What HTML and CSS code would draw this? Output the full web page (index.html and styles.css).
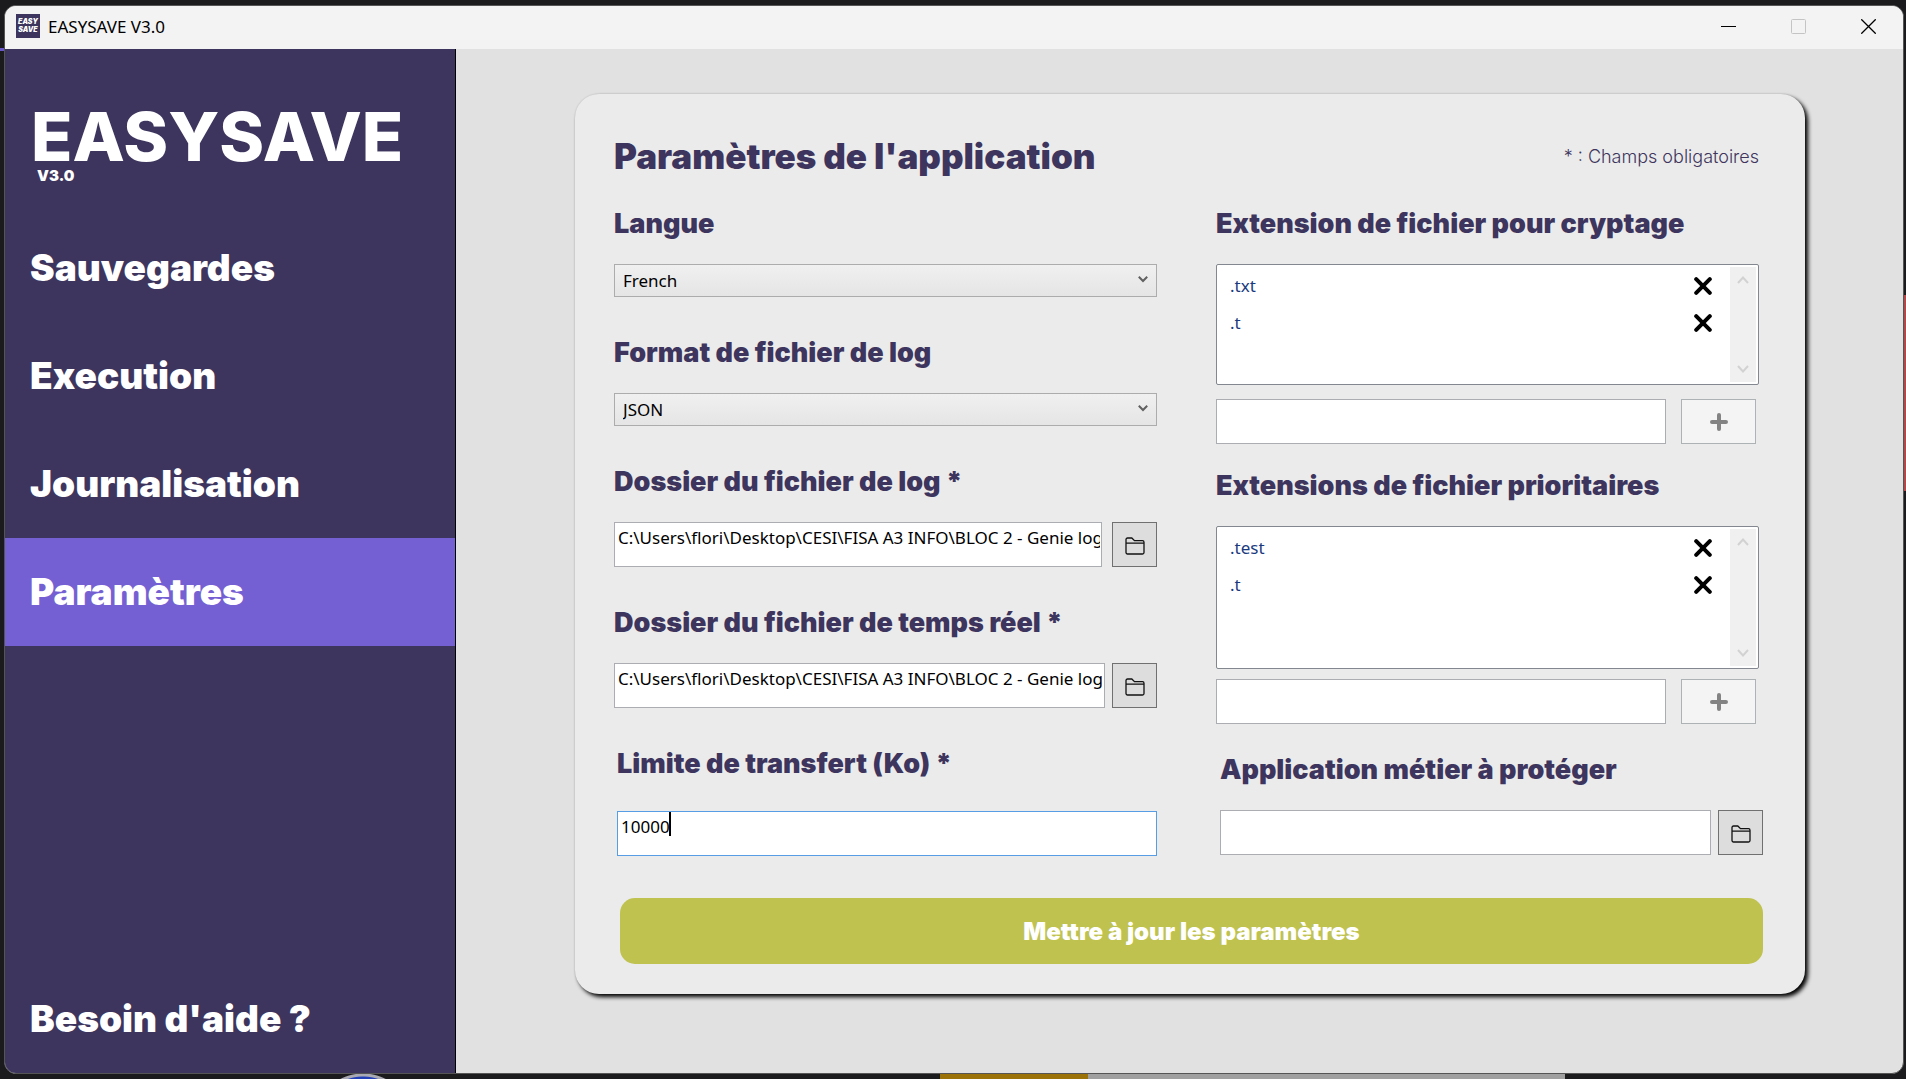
FILE: index.html
```html
<!DOCTYPE html>
<html lang="fr">
<head>
  <meta charset="UTF-8">
  <meta name="viewport" content="width=device-width, initial-scale=1.0">
  <title>EASYSAVE V3.0</title>
  <link rel="stylesheet" href="styles.css">
</head>
<body>
  <div class="window">
    <header class="titlebar">
      <span class="app-icon"><span>EASY</span><span>SAVE</span></span>
      <span class="app-title">EASYSAVE V3.0</span>
      <div class="window-buttons">
        <button type="button" aria-label="Réduire">
          <svg width="15" height="15" viewBox="0 0 15 15"><path d="M0 7.5h15" stroke="#000"/></svg>
        </button>
        <button type="button" aria-label="Agrandir" disabled>
          <svg width="15" height="15" viewBox="0 0 15 15"><rect x="0.5" y="0.5" width="14" height="14" rx="1" fill="none" stroke="#c4c4c4"/></svg>
        </button>
        <button type="button" aria-label="Fermer">
          <svg width="15" height="15" viewBox="0 0 15 15"><path d="M0.3 0.3l14.4 14.4M14.7 0.3L0.3 14.7" stroke="#000" stroke-width="1.3"/></svg>
        </button>
      </div>
    </header>

    <div class="layout">
      <nav class="sidebar">
        <div class="logo">EASYSAVE</div>
        <div class="version">V3.0</div>
        <a class="nav-link" href="#sauvegardes">Sauvegardes</a>
        <a class="nav-link" href="#execution">Execution</a>
        <a class="nav-link" href="#journalisation">Journalisation</a>
        <a class="nav-link active" href="#parametres">Paramètres</a>
        <a class="nav-link help" href="#aide">Besoin d'aide ?</a>
      </nav>

      <main class="content">
        <form class="card" id="settingsForm">
          <div class="card-header">
            <h1>Paramètres de l'application</h1>
            <span class="required-note">* : Champs obligatoires</span>
          </div>

          <div class="columns">
            <div class="column">
              <div class="field">
                <label for="language">Langue</label>
                <div class="select-wrap">
                  <select id="language" name="language">
                    <option>French</option>
                    <option>English</option>
                  </select>
                  <svg class="chevron" width="10" height="7" viewBox="0 0 10 7"><path d="M0.8 0.8L5 5l4.200-4.200" fill="none" stroke="#606060" stroke-width="2"/></svg>
                </div>
              </div>
              <div class="field">
                <label for="logFormat">Format de fichier de log</label>
                <div class="select-wrap">
                  <select id="logFormat" name="logFormat">
                    <option>JSON</option>
                    <option>XML</option>
                  </select>
                  <svg class="chevron" width="10" height="7" viewBox="0 0 10 7"><path d="M0.8 0.8L5 5l4.200-4.200" fill="none" stroke="#606060" stroke-width="2"/></svg>
                </div>
              </div>
              <div class="field">
                <label for="logFolder">Dossier du fichier de log *</label>
                <div class="input-row log-row">
                  <input type="text" id="logFolder" name="logFolder" value="C:\Users\flori\Desktop\CESI\FISA A3 INFO\BLOC 2 - Genie logiciel">
                  <button type="button" class="browse" aria-label="Parcourir">
                    <svg width="20" height="18" viewBox="0 0 20 18"><path d="M1 15.500V2.500A1.500 1.500 0 0 1 2.500 1H6.800L9.500 3.700H17.500A1.500 1.500 0 0 1 19 5.200V15.500A1.500 1.500 0 0 1 17.500 17H2.500A1.500 1.500 0 0 1 1 15.500zM1 6.200H19" fill="none" stroke="#111" stroke-width="1.3"/></svg>
                  </button>
                </div>
              </div>
              <div class="field">
                <label for="liveFolder">Dossier du fichier de temps réel *</label>
                <div class="input-row">
                  <input type="text" id="liveFolder" name="liveFolder" value="C:\Users\flori\Desktop\CESI\FISA A3 INFO\BLOC 2 - Genie logiciel">
                  <button type="button" class="browse" aria-label="Parcourir">
                    <svg width="20" height="18" viewBox="0 0 20 18"><path d="M1 15.500V2.500A1.500 1.500 0 0 1 2.500 1H6.800L9.500 3.700H17.500A1.500 1.500 0 0 1 19 5.200V15.500A1.500 1.500 0 0 1 17.500 17H2.500A1.500 1.500 0 0 1 1 15.500zM1 6.200H19" fill="none" stroke="#111" stroke-width="1.3"/></svg>
                  </button>
                </div>
              </div>
              <div class="field limit-field">
                <label for="limit">Limite de transfert (Ko) *</label>
                <div class="input-row">
                  <input type="text" id="limit" name="limit" class="focused" value="10000">
                  <span class="caret"></span>
                </div>
              </div>
            </div>

            <div class="column">
              <div class="field crypt-field">
                <label for="cryptExt">Extension de fichier pour cryptage</label>
                <div class="list">
                  <ul>
                    <li>.txt
                      <button type="button" class="remove" aria-label="Supprimer .txt"><svg width="18" height="18" viewBox="0 0 18 18"><path d="M2.200 2.200l13.600 13.600M15.800 2.200L2.200 15.800"/></svg></button>
                    </li>
                    <li>.t
                      <button type="button" class="remove" aria-label="Supprimer .t"><svg width="18" height="18" viewBox="0 0 18 18"><path d="M2.200 2.200l13.600 13.600M15.800 2.200L2.200 15.800"/></svg></button>
                    </li>
                  </ul>
                  <div class="scrollbar">
                    <svg width="12" height="8" viewBox="0 0 12 8"><path d="M1 7l5-5.500L11 7"/></svg>
                    <svg width="12" height="8" viewBox="0 0 12 8"><path d="M1 1l5 5.500L11 1"/></svg>
                  </div>
                </div>
                <div class="input-row add-row">
                  <input type="text" id="cryptExt" name="cryptExt">
                  <button type="button" class="add" aria-label="Ajouter" disabled><svg width="18" height="18" viewBox="0 0 18 18"><path d="M9 2v14M2 9h14"/></svg></button>
                </div>
              </div>
              <div class="field priority-field">
                <label for="priorityExt">Extensions de fichier prioritaires</label>
                <div class="list list-tall">
                  <ul>
                    <li>.test
                      <button type="button" class="remove" aria-label="Supprimer .test"><svg width="18" height="18" viewBox="0 0 18 18"><path d="M2.200 2.200l13.600 13.600M15.800 2.200L2.200 15.800"/></svg></button>
                    </li>
                    <li>.t
                      <button type="button" class="remove" aria-label="Supprimer .t"><svg width="18" height="18" viewBox="0 0 18 18"><path d="M2.200 2.200l13.600 13.600M15.800 2.200L2.200 15.800"/></svg></button>
                    </li>
                  </ul>
                  <div class="scrollbar">
                    <svg width="12" height="8" viewBox="0 0 12 8"><path d="M1 7l5-5.500L11 7"/></svg>
                    <svg width="12" height="8" viewBox="0 0 12 8"><path d="M1 1l5 5.500L11 1"/></svg>
                  </div>
                </div>
                <div class="input-row add-row">
                  <input type="text" id="priorityExt" name="priorityExt">
                  <button type="button" class="add" aria-label="Ajouter" disabled><svg width="18" height="18" viewBox="0 0 18 18"><path d="M9 2v14M2 9h14"/></svg></button>
                </div>
              </div>
              <div class="field app-field">
                <label for="businessApp">Application métier à protéger</label>
                <div class="input-row">
                  <input type="text" id="businessApp" name="businessApp">
                  <button type="button" class="browse" aria-label="Parcourir">
                    <svg width="20" height="18" viewBox="0 0 20 18"><path d="M1 15.500V2.500A1.500 1.500 0 0 1 2.500 1H6.800L9.500 3.700H17.500A1.500 1.500 0 0 1 19 5.200V15.500A1.500 1.500 0 0 1 17.500 17H2.500A1.500 1.500 0 0 1 1 15.500zM1 6.200H19" fill="none" stroke="#111" stroke-width="1.3"/></svg>
                  </button>
                </div>
              </div>
            </div>
          </div>

          <button type="submit" class="submit">Mettre à jour les paramètres</button>
        </form>
      </main>
    </div>
  </div>
</body>
</html>
```

FILE: styles.css
```css
* {
  box-sizing: border-box;
}
/* desktop visible around the window */
body {
  margin: 0;
  height: 100vh;
  padding: 5px 2px 5px 4px;
  background-color: #1b1b1d;
  background-image:
    linear-gradient(#6a58c8, #6a58c8),
    linear-gradient(#b04a4a, #b04a4a),
    radial-gradient(circle at 50% 50px, #2440b8 46px, #a9a9b4 47px, #a9a9b4 49px, transparent 50px),
    linear-gradient(90deg, #1b1b1d 49.3%, #9a7208 49.3%, #9a7208 57.1%, #a0a0a0 57.1%, #a0a0a0 82.1%, #1b1b1d 82.1%);
  background-position: 0 48px, right 295px, 336px bottom, left bottom;
  background-size: 4px 3px, 2px 196px, 54px 6px, 100% 6px;
  background-repeat: no-repeat;
  font-family: "Noto Sans", "Open Sans", sans-serif;
  color: #000;
}
button {
  padding: 0;
  cursor: pointer;
}
.window {
  height: 100%;
  display: flex;
  flex-direction: column;
  border: 1px solid #555;
  border-radius: 12px;
  overflow: hidden;
  background: #e1e1e1;
}
.titlebar {
  height: 43px;
  display: flex;
  align-items: center;
  padding: 0 0 3px 11px;
  background: #f3f3f3;
  font-size: 17px;
}
.app-icon {
  width: 24px;
  height: 24px;
  margin-right: 8px;
  display: flex;
  flex-direction: column;
  justify-content: center;
  align-items: center;
  background: #3d355d;
  color: #fff;
  font: italic 900 7px/8px Inter, sans-serif;
}
.window-buttons {
  margin-left: auto;
  display: flex;
}
.window-buttons button {
  width: 70px;
  height: 40px;
  display: flex;
  align-items: center;
  justify-content: center;
  border: none;
  background: none;
}
.layout {
  flex: 1;
  display: flex;
}

/* Sidebar */
.sidebar {
  width: 451px;
  flex-shrink: 0;
  display: flex;
  flex-direction: column;
  background: #3d355d;
  border-right: 1px solid #000;
  color: #fff;
  font-family: Inter, sans-serif;
  font-weight: 900;
}
.logo {
  margin-top: 52px;
  padding-left: 26px;
  font-size: 68px;
  font-weight: 800;
  line-height: 70px;
}
.version {
  padding-left: 32px;
  margin-bottom: 33px;
  font-size: 15px;
  line-height: 10px;
}
.nav-link {
  padding-left: 25px;
  color: #fff;
  font-size: 37px;
  line-height: 108px;
  text-decoration: none;
}
.nav-link.active {
  background: #7560d3;
}
.nav-link.help {
  margin-top: auto;
}

/* Settings card */
.content {
  flex: 1;
  padding: 45px 98px 0 119px;
}
.card {
  padding: 40px 42px 30px 39px;
  border-radius: 24px;
  background: #ebebeb;
  box-shadow: 3px 3px 4px #000, 0 0 2px rgba(0, 0, 0, 0.15);
  color: #3d355d;
  font-family: Inter, sans-serif;
}
.card-header {
  display: flex;
  align-items: center;
  justify-content: space-between;
  padding-right: 4px;
  margin-bottom: 29px;
}
h1 {
  margin: 0;
  font-size: 35px;
  font-weight: 900;
  line-height: 44px;
}
.required-note {
  font-size: 18px;
  font-weight: 300;
}
.columns {
  display: grid;
  grid-template-columns: 1fr 1fr;
  column-gap: 59px;
  padding-right: 4px;
}
.column {
  min-width: 0;
}
.field {
  margin-bottom: 39px;
}
.field label {
  display: block;
  margin-bottom: 23px;
  font-size: 27px;
  font-weight: 900;
  line-height: 34px;
}
.field input {
  flex: 1;
  min-width: 0;
  height: 45px;
  padding: 0 1px 15px 3px;
  border: 1px solid #abadb3;
  border-radius: 0;
  background: #fff;
  outline: none;
  font-family: "Noto Sans", "Open Sans", sans-serif;
  font-size: 17px;
}
.field input.focused {
  border-color: #569de5;
}
.input-row {
  position: relative;
  display: flex;
  gap: 7px;
}
.log-row {
  gap: 10px;
}
.caret {
  position: absolute;
  left: 52px;
  top: 1px;
  width: 2px;
  height: 24px;
  background: #000;
}
.select-wrap {
  position: relative;
}
select {
  display: block;
  width: 100%;
  height: 33px;
  padding: 0 8px;
  appearance: none;
  border: 1px solid #acacac;
  border-radius: 0;
  background: linear-gradient(#f0f0f0, #e5e5e5);
  color: #000;
  font-family: "Noto Sans", "Open Sans", sans-serif;
  font-size: 17px;
}
.chevron {
  position: absolute;
  right: 9px;
  top: 12px;
  pointer-events: none;
}
.browse {
  width: 45px;
  height: 45px;
  display: flex;
  align-items: center;
  justify-content: center;
  border: 1px solid #707070;
  background: #ddd;
}
.browse svg {
  margin-top: 3px;
}
.limit-field {
  margin: 0 0 0 3px;
}
.limit-field label {
  margin-bottom: 30px;
}
.app-field {
  margin: 0 -4px 0 4px;
}

/* Extension lists */
.list {
  height: 121px;
  display: flex;
  margin-bottom: 14px;
  padding: 2px;
  border: 1px solid #828790;
  border-radius: 2px;
  background: #fff;
}
.list-tall {
  height: 143px;
  margin-bottom: 10px;
}
.list ul {
  flex: 1;
  margin: 0;
  padding: 0 18px 0 11px;
  list-style: none;
}
.list li {
  height: 37px;
  display: flex;
  align-items: center;
  justify-content: space-between;
  color: #1a3a80;
  font-family: "Noto Sans", "Open Sans", sans-serif;
  font-size: 17px;
}
.remove {
  display: flex;
  border: none;
  background: none;
}
.remove svg {
  fill: none;
  stroke: #000;
  stroke-width: 4;
  stroke-linecap: round;
}
.scrollbar {
  width: 26px;
  display: flex;
  flex-direction: column;
  align-items: center;
  justify-content: space-between;
  padding: 9px 0;
  background: #f0f0f0;
}
.scrollbar svg {
  fill: none;
  stroke: #d2d2d2;
  stroke-width: 2;
}
.add-row {
  gap: 15px;
  padding-right: 3px;
}
.add {
  width: 75px;
  height: 45px;
  display: flex;
  align-items: center;
  justify-content: center;
  border: 1px solid #adb2b5;
  background: #f4f4f4;
}
.add svg {
  stroke: #838383;
  stroke-width: 4;
  stroke-linecap: round;
}
.crypt-field {
  margin-bottom: 25px;
}
.priority-field {
  margin-bottom: 29px;
}
.submit {
  display: block;
  width: calc(100% - 6px);
  height: 66px;
  margin: 42px 0 0 6px;
  border: none;
  border-radius: 15px;
  background: #bfc24f;
  color: #fff;
  font-family: Inter, sans-serif;
  font-size: 24px;
  font-weight: 900;
}
```
